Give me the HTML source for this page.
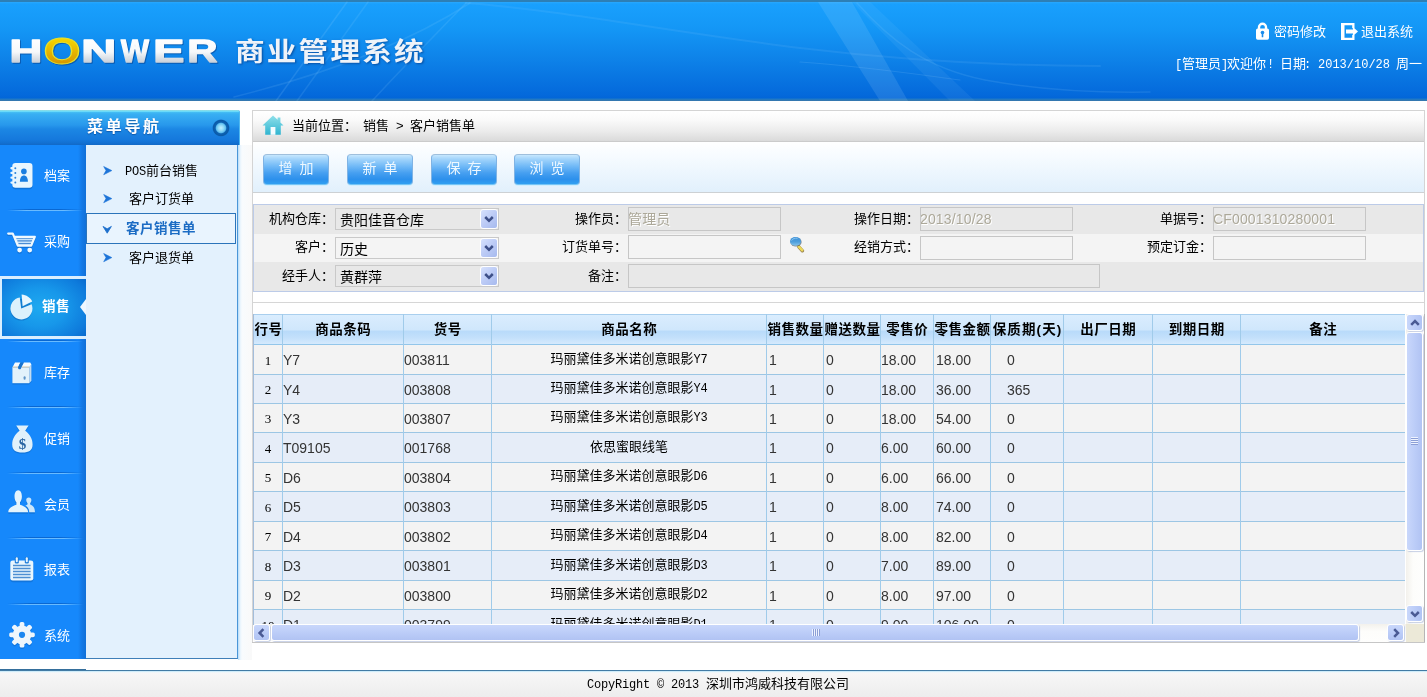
<!DOCTYPE html>
<html lang="zh-CN">
<head>
<meta charset="utf-8">
<title>HONWER 商业管理系统</title>
<style>
html,body{margin:0;padding:0}
body{width:1427px;height:697px;overflow:hidden;position:relative;background:#fff;will-change:transform;
 font-family:"Liberation Sans","Noto Sans CJK SC",sans-serif;font-size:13px;color:#000;line-height:1}
div,span,i,b{box-sizing:border-box}
.abs{position:absolute}
#hd{position:absolute;left:0;top:0;width:1427px;height:101px;overflow:hidden;
 background:linear-gradient(to bottom,#2d7fb5 0,#2d7fb5 2px,#2aa8fc 2px,#19a0fd 4px,#1497f6 28px,#0e83e9 58px,#0469db 95px,#0366d8 98px,#1c79c8 99px,#3b77a8 101px)}
#hd svg.sw{position:absolute;left:0;top:0}
#logo{position:absolute;left:0;top:0}
#title{position:absolute;left:235px;top:34px;font-size:26px;line-height:36px;font-weight:bold;letter-spacing:1.900px;color:#eef3f9;white-space:nowrap;transform:scaleX(1.14);transform-origin:0 50%;
 text-shadow:1px 1px 2px rgba(0,40,110,.55)}
.tl{position:absolute;top:24px;font-size:13px;line-height:15px;color:#fff;white-space:nowrap}
#wel{position:absolute;left:1175px;top:56px;width:252px;height:15px;font-size:13px;line-height:15px;color:#fff;white-space:pre}
#wel span{display:inline-block;vertical-align:baseline}
/* sidebar */
#sh{position:absolute;left:0;top:110px;width:240px;height:35px;
 background:linear-gradient(to bottom,#7fc3d0 0,#8ef4ff 1px,#46c0f4 2px,#38aff3 4px,#2898ec 15px,#1c87e4 19px,#1578dc 30px,#1270d2 33px,#1269c6 35px);
 border-right:1px solid #4fb8f0;border-radius:0 2px 0 0}
#sh .t{position:absolute;left:87px;top:7px;font-size:16px;line-height:20px;font-weight:bold;letter-spacing:2.7px;color:#fff;white-space:nowrap;text-shadow:0 1px 1px rgba(0,50,120,.5)}
#sh .c{position:absolute;left:212px;top:9px;width:18px;height:18px;border-radius:50%;
 background:radial-gradient(circle closest-side at 50% 50%,#c2efff 0,#92daf8 30%,#5fbff0 52%,#0d62b2 64%,#0a5aa8 86%,rgba(20,112,200,.6) 94%,rgba(20,112,200,0) 100%)}
#sl{position:absolute;left:0;top:145px;width:86px;height:514px;background:linear-gradient(to right,#1688fb 0,#1688fb 78px,#1379e6 82px,#1170d8 86px);overflow:hidden}
.mi{position:absolute;left:0;width:86px;height:66px}
.mi .tx{position:absolute;left:44px;top:23px;font-size:13px;line-height:16px;color:#fff;white-space:nowrap;letter-spacing:0}
.mi svg{position:absolute;left:0;top:0}
.sep{position:absolute;left:7px;width:76px;height:2px;background:linear-gradient(to right,rgba(8,100,205,0),rgba(8,100,205,.9) 30%,rgba(8,100,205,.9) 70%,rgba(8,100,205,0)) 0 0/100% 1px no-repeat,linear-gradient(to right,rgba(110,190,255,0),rgba(110,190,255,.95) 25%,rgba(110,190,255,.95) 75%,rgba(110,190,255,0)) 0 1px/100% 1px no-repeat}
#sel{position:absolute;left:0;top:131px;width:86px;height:63px;background:#d9eeff}
#sel .in{position:absolute;left:2px;top:3px;width:84px;height:57px;
 background:radial-gradient(ellipse 70% 75% at 45% 50%,#1ea9f0 0,#1797ea 45%,#0e7bdc 85%,#0a6dd0 100%)}
#sel .tx{position:absolute;left:42px;top:23px;font-size:13.5px;line-height:16px;font-weight:bold;color:#fff;white-space:nowrap;letter-spacing:.4px}
#sel .ar{position:absolute;left:80px;top:23px;width:0;height:0;border-style:solid;border-width:8px 6px 8px 0;border-color:transparent #eef7ff transparent transparent}
#sp{position:absolute;left:86px;top:145px;width:152px;height:514px;background:#e3f1fd;border-right:1px solid #4a96d8;border-bottom:1px solid #3f7fb8}
#spg{position:absolute;left:238px;top:145px;width:14px;height:515px;background:linear-gradient(to right,#b4dbf8 0,#e6f3fd 2px,#f8fbfe 4px,#f9f9f9 14px)}
.si{position:absolute;left:0;width:151px;height:29px;font-size:13px;line-height:29px;white-space:nowrap}
.si .tx{position:absolute;left:0;width:151px;text-align:center;top:0}
.si svg{position:absolute;left:16px;top:9px}
.si.on{left:0;width:150px;height:31px;border:1px solid #2b74ba;background:#e9f4fe;line-height:30px}
.si.on .tx{font-size:13.5px;letter-spacing:.5px;font-weight:bold;color:#1c6cc4;width:148px}
.si.on svg{left:14.5px;top:9.5px}
/* main */
#mn{position:absolute;left:252px;top:110px;width:1173px;height:533px;border:1px solid #d4d4d4;border-bottom:none;background:#fff}
#bc{position:absolute;left:0;top:0;width:1171px;height:31px;background:linear-gradient(to bottom,#fff 0,#fafafa 30%,#ebebeb 68%,#dadada 100%);border-bottom:1px solid #cbcbcb}
#bc .tx{position:absolute;top:7px;font-size:13px;line-height:15px;white-space:nowrap}
#tb{position:absolute;left:0;top:31px;width:1171px;height:51px;background:linear-gradient(to bottom,#fff 0,#f6fbff 30%,#e1f0fc 100%);border-bottom:1px solid #cdd1d4}
.btn{position:absolute;top:12px;width:66px;height:31px;border-radius:4px;border:1px solid;border-color:#9fbfdc #7fb3e4 #74c4f6 #7fb3e4;
 background:linear-gradient(to bottom,#c6e7fe 0,#a2d4fb 14%,#72baf7 38%,#469ff0 62%,#2c90ec 84%,#31a0f1 100%);
 box-shadow:0 1px 0 #cfeefe;color:#eef8ff;font-size:14px;line-height:26px;text-align:center;white-space:nowrap;letter-spacing:0;word-spacing:3px}
#fm{position:absolute;left:0;top:93px;width:1171px;height:88px;border:1px solid #bccbe8;background:#e8e8e8}
.fr{position:absolute;left:0;width:1169px}
.lb{position:absolute;font-size:13px;line-height:15px;text-align:right;white-space:nowrap;width:90px}
.ip{position:absolute;height:24px;border:1px solid #c6c6c6;font-size:14px;line-height:23px;padding-left:0;text-indent:-1px;white-space:nowrap;color:#aca899;overflow:hidden;text-shadow:1px 1px 0 #fff;letter-spacing:.15px}
.sl{position:absolute;width:164px;height:22px;border:1px solid #c9c9c9;font-size:14px;line-height:23px;padding-left:4px;white-space:nowrap;color:#000}
.sl i{position:absolute;right:0;top:0;width:18px;height:20px;border:1px solid #fff;border-radius:3px;background:linear-gradient(135deg,#d6e1fd,#bccbf6 50%,#a7baee)}
.sl i svg{position:absolute;left:2px;top:2.5px}
#hl{position:absolute;left:0;top:191px;width:1171px;height:1px;background:#d6d6d6}
/* grid */
#gd{position:absolute;left:1px;top:203px;width:1151px;height:310px;overflow:hidden;background:#f3f3f3}
#gh{position:absolute;left:0;top:0;width:1152px;height:31px;background:linear-gradient(to bottom,#daedfe 0,#d0e7fc 50%,#b9dbfa 57%,#c3e0fb 78%,#d5eafd 100%);border-top:1px solid #a9cfee;border-bottom:1px solid #93c6ea}
.hc{position:absolute;top:0;height:29px;font-weight:bold;font-size:13.5px;line-height:29px;text-align:center;white-space:nowrap;overflow:visible;letter-spacing:.5px;text-indent:.5px}
.vl{position:absolute;top:0;width:1px;height:311px;background:#a0cbea}
.rw{position:absolute;left:0;width:1152px;border-bottom:1px solid #9cc6e4}
.rw.a{background:#f3f3f3}
.rw.b{background:#e6edf8}
.c{position:absolute;top:0;white-space:nowrap;font-size:14px;color:#333}
.c.n{font-family:"Liberation Serif",serif;font-size:13px;color:#000;text-align:center}
.c.nm{font-size:13px;color:#000;text-align:center}
/* scrollbars */
#vs{position:absolute;left:1153px;top:203px;width:18px;height:310px;background:linear-gradient(to right,#f3f1ec,#fdfdfb 40%,#fefefd)}
#hs{position:absolute;left:1px;top:513px;width:1152px;height:18px;background:linear-gradient(to bottom,#f3f1ec,#fdfdfb 40%,#fefefd)}
#cr{position:absolute;left:1153px;top:513px;width:18px;height:18px;background:#ece9d8}
.sb{position:absolute;width:17px;height:17px;border-radius:3px;border:1px solid #fff;background:linear-gradient(to right,#c9d7fb,#bccdf8 50%,#b1c3f3);box-shadow:1px 1px 1px rgba(130,150,200,.45)}
.sb.h{background:linear-gradient(to bottom,#c9d7fb,#bccdf8 50%,#b1c3f3)}
.sb svg{position:absolute;left:1.5px;top:1.5px}
.th{position:absolute;border-radius:3px;border:1px solid #fff;box-shadow:1px 1px 1px rgba(130,150,200,.45)}
/* footer */
#ft{position:absolute;left:0;top:670px;width:1427px;height:27px;background:linear-gradient(to bottom,#3d7299 0,#4684b0 1px,#b5e2f6 1px,#e9f6fc 2px,#f7f7f7 3px,#f4f4f4 10px,#ededed 27px)}
#ft .tx{position:absolute;left:587px;top:6px;font-size:13px;line-height:15px;white-space:nowrap}
.mo{font-family:"Liberation Mono",monospace;font-size:12px;letter-spacing:-.2px}
</style>
</head>
<body>
<div id="hd">
<svg class="sw" width="1427" height="101" viewBox="0 0 1427 101">
<g fill="none" stroke="#a8dcff" stroke-linecap="round">
<path d="M234 97C310 78 400 48 470 3" stroke-width="1.500" opacity=".12"/>
<path d="M276 101L347 2" stroke-width="1.500" opacity=".14"/>
<path d="M297 101L368 2" stroke-width="1.500" opacity=".12"/>
<path d="M372 101C402 68 440 30 466 3" stroke-width="1.500" opacity=".12"/>
<path d="M466 3C560 10 660 30 800 48C900 60 1000 66 1100 66" stroke-width="2" opacity=".1"/>
<path d="M857 3C890 40 925 68 985 80C1040 90 1090 93 1150 92" stroke-width="1.500" opacity=".12"/>
<path d="M800 62C860 66 900 72 960 80" stroke-width="1.200" opacity=".14"/>
</g>
<path d="M818 2L852 2L908 101L880 101Z" fill="#bfe6ff" opacity=".13"/>
<path d="M852 2L870 2L975 101L950 101Z" fill="#bfe6ff" opacity=".07"/>
</svg>
<svg id="logo" width="230" height="101" viewBox="0 0 230 101" style="filter:drop-shadow(1.2px 1.500px .6px rgba(6,55,130,.5))"><defs><linearGradient id="lg" x1="0" y1="0" x2="0" y2="100" gradientUnits="userSpaceOnUse"><stop offset=".39" stop-color="#ffffff"/><stop offset=".52" stop-color="#f6f8fa"/><stop offset=".63" stop-color="#c6ced8"/></linearGradient><linearGradient id="og" x1="0" y1="0" x2="0" y2="100" gradientUnits="userSpaceOnUse"><stop offset=".38" stop-color="#f7d800"/><stop offset=".65" stop-color="#d69400"/></linearGradient></defs>
<text font-family="Liberation Sans,sans-serif" font-weight="bold" stroke-linejoin="round"><tspan x="9.61" y="62.30" font-size="31.8" textLength="32.80" lengthAdjust="spacingAndGlyphs" fill="url(#lg)" stroke="url(#lg)" stroke-width="1.3">H</tspan><tspan x="43.54" y="64.10" font-size="36.4" textLength="37.17" lengthAdjust="spacingAndGlyphs" fill="url(#og)" stroke="#e9e12a" stroke-width="1">O</tspan><tspan x="81.21" y="62.30" font-size="31.8" textLength="35.01" lengthAdjust="spacingAndGlyphs" fill="url(#lg)" stroke="url(#lg)" stroke-width="1.3">N</tspan><tspan x="121.12" y="62.30" font-size="31.8" textLength="27.96" lengthAdjust="spacingAndGlyphs" fill="url(#lg)" stroke="url(#lg)" stroke-width="1.3">W</tspan><tspan x="153.33" y="62.30" font-size="31.8" textLength="31.15" lengthAdjust="spacingAndGlyphs" fill="url(#lg)" stroke="url(#lg)" stroke-width="1.3">E</tspan><tspan x="187.15" y="62.30" font-size="31.8" textLength="30.26" lengthAdjust="spacingAndGlyphs" fill="url(#lg)" stroke="url(#lg)" stroke-width="1.3">R</tspan></text>
</svg>
<div id="title">商业管理系统</div>
<svg class="abs" style="left:1255px;top:22px" width="15" height="19" viewBox="0 0 15 19"><path d="M4 8V5.200a3.500 3.500 0 0 1 7 0V8" fill="none" stroke="#fff" stroke-width="2.400"/><rect x="1" y="6.600" width="13" height="11.200" rx="1.700" fill="#fff"/><circle cx="7.500" cy="10.600" r="1.800" fill="#1b8cec"/><rect x="6.700" y="11" width="1.600" height="4.200" rx=".5" fill="#1b8cec"/></svg>
<div class="tl" style="left:1274px">密码修改</div>
<svg class="abs" style="left:1340px;top:22px" width="19" height="19" viewBox="0 0 19 19"><path d="M1 1h13.500v5.200h-2.300V3.300H4.500v12.400h7.700v-2.900h2.300V18H1z" fill="#fff"/><path d="M6 7.600h7V5l5 4.500-5 4.500v-2.600H6z" fill="#fff"/></svg>
<div class="tl" style="left:1361px">退出系统</div>
<div id="wel"><span class="mo" style="width:7px">[</span><span style="width:39px">管理员</span><span class="mo" style="width:6px">]</span><span style="width:39px">欢迎你</span><span class="mo" style="width:14px;text-indent:1px">! </span><span style="width:24px">日期</span><span class="mo" style="width:14px">: </span><span class="mo" style="width:78px;letter-spacing:0">2013/10/28 </span><span>周一</span></div>
</div>
<div id="sh"><div class="t">菜单导航</div><div class="c"></div></div>
<div id="sl">
<div class="mi" style="top:0px"><div class="tx">档案</div></div>
<svg class="abs" style="left:10px;top:18px" width="24" height="27" viewBox="0 0 24 27"><rect x="2.300" y="1.600" width="20.200" height="24.600" rx="3.200" fill="#0b5fb8" opacity=".5"/><rect x="2.300" y="0" width="20.200" height="24.800" rx="3.200" fill="#e9f6fe"/><rect x=".3" y="4.1" width="4.600" height="2.300" rx="1.150" fill="#eaf7fe"/><circle cx="5.300" cy="5.2" r="1" fill="#2b82d8"/><rect x=".3" y="8.8" width="4.600" height="2.300" rx="1.150" fill="#eaf7fe"/><circle cx="5.300" cy="10.0" r="1" fill="#2b82d8"/><rect x=".3" y="13.5" width="4.600" height="2.300" rx="1.150" fill="#eaf7fe"/><circle cx="5.300" cy="14.7" r="1" fill="#2b82d8"/><rect x=".3" y="18.4" width="4.600" height="2.300" rx="1.150" fill="#eaf7fe"/><circle cx="5.300" cy="19.5" r="1" fill="#2b82d8"/><circle cx="13.900" cy="8.400" r="2.800" fill="#1a7ee0"/><path d="M9.900 18.800C9.900 14.600 11.600 12.600 13.900 12.600S17.900 14.600 17.900 18.800z" fill="#1a7ee0"/></svg>
<div class="mi" style="top:66px"><div class="tx">采购</div></div>
<svg class="abs" style="left:7px;top:87.4px" width="30" height="23" viewBox="0 0 30 23"><g opacity=".5" transform="translate(0,1.300)"><path d="M1.200 1.600h4.600l5 12h13.400l3.600-8.800H7.600" fill="none" stroke="#0b5fb8" stroke-width="2.200" stroke-linejoin="round" stroke-linecap="round"/><circle cx="12.600" cy="18.100" r="2.400" fill="#0b5fb8"/><circle cx="22.700" cy="18.100" r="2.400" fill="#0b5fb8"/></g><path d="M7.600 4.800h20.200l-3.600 8.800H10.800z" fill="#c9e5fc"/><path d="M9.400 6.200h16.800M10.400 8.900h15M11.400 11.700h13" stroke="#4a8cd4" stroke-width="1.200" fill="none"/><path d="M1.200 1.600h4.600l5 12h13.400l3.600-8.800H7.600" fill="none" stroke="#f0f9ff" stroke-width="2.200" stroke-linejoin="round" stroke-linecap="round"/><circle cx="12.600" cy="18.100" r="2.400" fill="#f0f9ff"/><circle cx="22.700" cy="18.100" r="2.400" fill="#f0f9ff"/></svg>
<div id="sel"><div class="in"></div><div class="tx">销售</div><div class="ar"></div></div>
<svg class="abs" style="left:10px;top:148.7px" width="24" height="28" viewBox="0 0 24 28"><circle cx="11.200" cy="15.800" r="10.800" fill="#0b5fb8" opacity=".5"/><path d="M11.200 14.400L9.800 3.500A11 11 0 1 0 21.600 10.200z" fill="#dcf1fc"/><path d="M12.600 12.200L11.600.6c4.800.2 8.800 3.200 10.600 7z" fill="#e8f7fe"/></svg>
<div class="mi" style="top:197px"><div class="tx">库存</div></div>
<svg class="abs" style="left:11.8px;top:216.8px" width="20" height="23" viewBox="0 0 20 23"><path d="M.4 5.600L3 .6h5.600L6.200 5h3L11.800.6h6.400l1.200 2v16.200l-2.400 2.400H.4z" fill="#0b5fb8" opacity=".45" transform="translate(0,1.300)"/><path d="M.4 5.400h16.800v15.800H.4z" fill="#e2f2fb"/><path d="M17.200 5.400l2.200-2.800v16.200l-2.200 2.400z" fill="#c2dcf2"/><path d="M.4 5.400L3 .6h5.400L6 5.400zM9.200 5.400L11.800.6h6.400l1.200 2-2.200 2.800z" fill="#f6fcff"/><path d="M.4 5.400h5.600l.4-1H.9zM9.200 5.400h8l.6-1h-8z" fill="#c9b48a" opacity=".7"/><path d="M6 5.400L8.400.6h3.400L9.200 5.400c0 2.600-3.200 2.600-3.200 0z" fill="#1b74cc"/><rect x="11.600" y="14.200" width="2" height="3.600" rx="1" fill="#5f95c8"/></svg>
<div class="mi" style="top:263px"><div class="tx">促销</div></div>
<svg class="abs" style="left:11.8px;top:279.9px" width="21" height="30" viewBox="0 0 21 30"><path d="M4.200.4h12.400l-3.400 5.400c4.400 3 7.400 8.200 7.400 13.600 0 5.800-3.600 8-10.200 8S.2 25.200.2 19.400c0-5.400 3-10.600 7.400-13.600z" fill="#0b5fb8" opacity=".45" transform="translate(0,1.300)"/><path d="M4.200.4h12.400l-3.400 5.400c4.400 3 7.400 8.200 7.400 13.600 0 5.800-3.600 8-10.200 8S.2 25.200.2 19.400c0-5.400 3-10.600 7.400-13.600z" fill="#e0f1fb"/><text x="10.400" y="24.300" font-family="Liberation Serif,serif" font-weight="bold" font-size="15" text-anchor="middle" fill="#2a66a2">$</text></svg>
<div class="mi" style="top:329px"><div class="tx">会员</div></div>
<svg class="abs" style="left:8px;top:344.7px" width="28" height="25" viewBox="0 0 28 25"><g fill="#0b5fb8" opacity=".45" transform="translate(0,1.500)"><path d="M.3 22.300C.3 17.800 4 16.300 8.400 14.700V12.300C7.200 10.900 6.500 8.900 6.500 6.400 6.500 3 7.900.2 10.200.2S13.900 3 13.900 6.400C13.900 8.900 13.200 10.900 12 12.300V14.700C16.400 16.300 20.100 17.800 20.100 22.300Z"/><path d="M21.200 22.300C21.200 18.600 19.400 16.900 17.300 15.600 18.500 15.100 19.500 14.700 19.500 14.200V13.200C18.700 12.300 18.200 11.300 18.200 10.200 18.200 8.600 19.200 7.500 20.800 7.500S23.400 8.600 23.400 10.200C23.400 11.300 23 12.300 22.200 13.200V14.400C25 15.600 27 17.300 27 22.300Z"/></g><path d="M21.200 22.300C21.200 18.600 19.400 16.900 17.300 15.600 18.500 15.100 19.500 14.700 19.500 14.200V13.200C18.700 12.300 18.200 11.300 18.200 10.200 18.200 8.600 19.200 7.500 20.800 7.500S23.400 8.600 23.400 10.200C23.400 11.300 23 12.300 22.200 13.200V14.400C25 15.600 27 17.300 27 22.300Z" fill="#cbe6fa"/><path d="M.3 22.300C.3 17.800 4 16.300 8.400 14.700V12.300C7.200 10.900 6.500 8.900 6.500 6.400 6.500 3 7.900.2 10.200.2S13.900 3 13.900 6.400C13.900 8.900 13.200 10.900 12 12.300V14.700C16.400 16.300 20.100 17.800 20.100 22.300Z" fill="#e4f4fd"/></svg>
<div class="mi" style="top:394px"><div class="tx">报表</div></div>
<svg class="abs" style="left:10.3px;top:411.9px" width="24" height="26" viewBox="0 0 24 26"><rect x=".3" y="4.800" width="23" height="20.400" rx="2.400" fill="#0b5fb8" opacity=".45"/><rect x=".3" y="3.400" width="23" height="20.200" rx="2.400" fill="#e9f6fe"/><path d="M3 8.500h17.600M3 11.500h17.600M3 14.500h17.600M3 17.500h17.600M3 20.500h17.600" stroke="#4d8fd2" stroke-width="1.500" fill="none"/><rect x="4.800" y="0" width="4" height="6.600" rx="1.300" fill="#1d7cda"/><rect x="14.800" y="0" width="4" height="6.600" rx="1.300" fill="#1d7cda"/><rect x="5.800" y=".3" width="2" height="5" rx="1" fill="#e9f6fe"/><rect x="15.800" y=".3" width="2" height="5" rx="1" fill="#e9f6fe"/></svg>
<div class="mi" style="top:460px"><div class="tx">系统</div></div>
<svg class="abs" style="left:8.9px;top:476.6px" width="26" height="28" viewBox="0 0 26 28"><g fill="#0b5fb8" opacity=".4" transform="translate(0,1.300)"><rect x="10.60" y="0.00" width="4.800" height="6.500" rx="1.700" transform="rotate(0 13.00 12.80)"/><rect x="10.60" y="0.00" width="4.800" height="6.500" rx="1.700" transform="rotate(45 13.00 12.80)"/><rect x="10.60" y="0.00" width="4.800" height="6.500" rx="1.700" transform="rotate(90 13.00 12.80)"/><rect x="10.60" y="0.00" width="4.800" height="6.500" rx="1.700" transform="rotate(135 13.00 12.80)"/><rect x="10.60" y="0.00" width="4.800" height="6.500" rx="1.700" transform="rotate(180 13.00 12.80)"/><rect x="10.60" y="0.00" width="4.800" height="6.500" rx="1.700" transform="rotate(225 13.00 12.80)"/><rect x="10.60" y="0.00" width="4.800" height="6.500" rx="1.700" transform="rotate(270 13.00 12.80)"/><rect x="10.60" y="0.00" width="4.800" height="6.500" rx="1.700" transform="rotate(315 13.00 12.80)"/><circle cx="13.00" cy="12.80" r="9.300"/></g><g fill="#eef6fc"><rect x="10.60" y="0.00" width="4.800" height="6.500" rx="1.700" transform="rotate(0 13.00 12.80)"/><rect x="10.60" y="0.00" width="4.800" height="6.500" rx="1.700" transform="rotate(45 13.00 12.80)"/><rect x="10.60" y="0.00" width="4.800" height="6.500" rx="1.700" transform="rotate(90 13.00 12.80)"/><rect x="10.60" y="0.00" width="4.800" height="6.500" rx="1.700" transform="rotate(135 13.00 12.80)"/><rect x="10.60" y="0.00" width="4.800" height="6.500" rx="1.700" transform="rotate(180 13.00 12.80)"/><rect x="10.60" y="0.00" width="4.800" height="6.500" rx="1.700" transform="rotate(225 13.00 12.80)"/><rect x="10.60" y="0.00" width="4.800" height="6.500" rx="1.700" transform="rotate(270 13.00 12.80)"/><rect x="10.60" y="0.00" width="4.800" height="6.500" rx="1.700" transform="rotate(315 13.00 12.80)"/><circle cx="13.00" cy="12.80" r="9.300"/></g><circle cx="13.00" cy="12.80" r="3.100" fill="#1a86f0"/></svg>
<div class="sep" style="top:64px"></div>
<div class="sep" style="top:195px"></div>
<div class="sep" style="top:261px"></div>
<div class="sep" style="top:327px"></div>
<div class="sep" style="top:392px"></div>
<div class="sep" style="top:458px"></div>
</div>
<div id="sp">
<div class="si" style="top:11px"><svg width="11" height="11" viewBox="0 0 11 11"><path d="M1.700 1.500L9.800 5.600 1.700 9.700 4 5.600z" fill="#1d74d8" stroke="#1d74d8" stroke-width=".6" stroke-linejoin="round"/></svg><div class="tx"><span class="mo">POS</span>前台销售</div></div>
<div class="si" style="top:39px"><svg width="11" height="11" viewBox="0 0 11 11"><path d="M1.700 1.500L9.800 5.600 1.700 9.700 4 5.600z" fill="#1d74d8" stroke="#1d74d8" stroke-width=".6" stroke-linejoin="round"/></svg><div class="tx">客户订货单</div></div>
<div class="si on" style="top:68px"><svg width="11" height="11" viewBox="0 0 11 11"><path d="M1 2.400L5.200 4.800 9.400 2.400 5.200 9.200z" fill="#1d6fcc" stroke="#1d6fcc" stroke-width=".8" stroke-linejoin="round"/></svg><div class="tx">客户销售单</div></div>
<div class="si" style="top:98px"><svg width="11" height="11" viewBox="0 0 11 11"><path d="M1.700 1.500L9.800 5.600 1.700 9.700 4 5.600z" fill="#1d74d8" stroke="#1d74d8" stroke-width=".6" stroke-linejoin="round"/></svg><div class="tx">客户退货单</div></div>
</div><div id="spg"></div>
<div id="mn">
<div id="bc">
<svg class="abs" style="left:8px;top:3px" width="24" height="24" viewBox="0 0 24 24"><defs><linearGradient id="hg" x1="0" y1="0" x2="0" y2="1"><stop offset="0" stop-color="#8fe0ea"/><stop offset="1" stop-color="#2fb4d0"/></linearGradient></defs>
<path d="M12 1.500L1.500 11.400h2.700v9.400h15.600v-9.400h2.700L19.400 8.500V3.400h-2.800v2.400z" fill="url(#hg)"/><rect x="9.600" y="13" width="4.800" height="7.800" fill="#f4fcff"/></svg>
<div class="tx" style="left:39px">当前位置：</div><div class="tx" style="left:110px">销售</div><div class="tx" style="left:143px">&gt;</div><div class="tx" style="left:157px">客户销售单</div>
</div>
<div id="tb">
<div class="btn" style="left:10px">增 加</div>
<div class="btn" style="left:94px">新 单</div>
<div class="btn" style="left:178px">保 存</div>
<div class="btn" style="left:261px">浏 览</div>
</div>
<div id="fm">
<div class="fr" style="top:0px;height:29px;background:#e8e8e8"></div>
<div class="fr" style="top:29px;height:28px;background:#f4f4f4"></div>
<div class="fr" style="top:57px;height:29px;background:#e8e8e8"></div>
<div class="lb" style="left:-10px;top:6px">机构仓库：</div>
<div class="sl" style="left:81px;top:3px">贵阳佳音仓库<i><svg width="12" height="12" viewBox="0 0 12 12"><path d="M2.200 4L6 7.800 9.800 4" fill="none" stroke="#3d4f88" stroke-width="2.500"/></svg></i></div>
<div class="lb" style="left:-10px;top:34px">客户：</div>
<div class="sl" style="left:81px;top:32px">历史<i><svg width="12" height="12" viewBox="0 0 12 12"><path d="M2.200 4L6 7.800 9.800 4" fill="none" stroke="#3d4f88" stroke-width="2.500"/></svg></i></div>
<div class="lb" style="left:-10px;top:63px">经手人：</div>
<div class="sl" style="left:81px;top:60px">黄群萍<i><svg width="12" height="12" viewBox="0 0 12 12"><path d="M2.200 4L6 7.800 9.800 4" fill="none" stroke="#3d4f88" stroke-width="2.500"/></svg></i></div>
<div class="lb" style="left:283px;top:6px">操作员：</div>
<div class="ip" style="left:374px;top:2px;width:153px;height:24px;color:#aca899">管理员</div>
<div class="lb" style="left:283px;top:34px">订货单号：</div>
<div class="ip" style="left:374px;top:30px;width:153px;height:24px;color:#aca899"></div>
<div class="lb" style="left:283px;top:63px">备注：</div>
<div class="ip" style="left:374px;top:59px;width:472px;height:24px;color:#aca899"></div>
<div class="lb" style="left:575px;top:6px">操作日期：</div>
<div class="ip" style="left:666px;top:2px;width:153px;height:24px;color:#aca899">2013/10/28</div>
<div class="lb" style="left:575px;top:34px">经销方式：</div>
<div class="ip" style="left:666px;top:31px;width:153px;height:24px;color:#aca899"></div>
<div class="lb" style="left:868px;top:6px">单据号：</div>
<div class="ip" style="left:959px;top:2px;width:153px;height:24px;color:#aca899">CF0001310280001</div>
<div class="lb" style="left:868px;top:34px">预定订金：</div>
<div class="ip" style="left:959px;top:31px;width:153px;height:24px;color:#aca899"></div>
<svg class="abs" style="left:535px;top:31px" width="17" height="17" viewBox="0 0 17 17"><defs><linearGradient id="mg" x1="0" y1="0" x2="0" y2="1"><stop offset="0" stop-color="#3a8fd8"/><stop offset=".55" stop-color="#4f9fdc"/><stop offset="1" stop-color="#86c4ea"/></linearGradient></defs>
<path d="M9.800 10.800l3.600 4" stroke="#7a5c1c" stroke-width="3.400" stroke-linecap="round" opacity=".75"/><path d="M9.600 10.300l3.500 3.900" stroke="#ecd85a" stroke-width="2.600" stroke-linecap="round"/>
<ellipse cx="7" cy="6" rx="5.600" ry="4.600" fill="#4a5560" opacity=".7"/><ellipse cx="6.500" cy="5.400" rx="5.500" ry="4.400" fill="url(#mg)"/><path d="M2.600 4.600C3.600 2.600 6 1.800 8.600 2.300" stroke="#9ad0f4" stroke-width="1" fill="none" opacity=".8"/></svg>
</div>
<div id="hl"></div>
<div id="gd">
<div class="rw a" style="top:31px;height:30px">
<div class="c n" style="left:0px;width:28px;line-height:31px">1</div>
<div class="c" style="left:29px;line-height:31px">Y7</div>
<div class="c" style="left:150px;line-height:31px">003811</div>
<div class="c nm" style="left:238px;width:274px;line-height:27px">玛丽黛佳多米诺创意眼影<span class="mo">Y7</span></div>
<div class="c" style="left:515px;line-height:31px">1</div>
<div class="c" style="left:572px;line-height:31px">0</div>
<div class="c" style="left:627px;line-height:31px">18.00</div>
<div class="c" style="left:682px;line-height:31px">18.00</div>
<div class="c" style="left:753px;line-height:31px">0</div>
</div>
<div class="rw b" style="top:61px;height:29px">
<div class="c n" style="left:0px;width:28px;line-height:30px">2</div>
<div class="c" style="left:29px;line-height:30px">Y4</div>
<div class="c" style="left:150px;line-height:30px">003808</div>
<div class="c nm" style="left:238px;width:274px;line-height:26px">玛丽黛佳多米诺创意眼影<span class="mo">Y4</span></div>
<div class="c" style="left:515px;line-height:30px">1</div>
<div class="c" style="left:572px;line-height:30px">0</div>
<div class="c" style="left:627px;line-height:30px">18.00</div>
<div class="c" style="left:682px;line-height:30px">36.00</div>
<div class="c" style="left:753px;line-height:30px">365</div>
</div>
<div class="rw a" style="top:90px;height:29px">
<div class="c n" style="left:0px;width:28px;line-height:30px">3</div>
<div class="c" style="left:29px;line-height:30px">Y3</div>
<div class="c" style="left:150px;line-height:30px">003807</div>
<div class="c nm" style="left:238px;width:274px;line-height:26px">玛丽黛佳多米诺创意眼影<span class="mo">Y3</span></div>
<div class="c" style="left:515px;line-height:30px">1</div>
<div class="c" style="left:572px;line-height:30px">0</div>
<div class="c" style="left:627px;line-height:30px">18.00</div>
<div class="c" style="left:682px;line-height:30px">54.00</div>
<div class="c" style="left:753px;line-height:30px">0</div>
</div>
<div class="rw b" style="top:119px;height:30px">
<div class="c n" style="left:0px;width:28px;line-height:31px">4</div>
<div class="c" style="left:29px;line-height:31px">T09105</div>
<div class="c" style="left:150px;line-height:31px">001768</div>
<div class="c nm" style="left:238px;width:274px;line-height:27px">依思蜜眼线笔</div>
<div class="c" style="left:515px;line-height:31px">1</div>
<div class="c" style="left:572px;line-height:31px">0</div>
<div class="c" style="left:627px;line-height:31px">6.00</div>
<div class="c" style="left:682px;line-height:31px">60.00</div>
<div class="c" style="left:753px;line-height:31px">0</div>
</div>
<div class="rw a" style="top:149px;height:29px">
<div class="c n" style="left:0px;width:28px;line-height:30px">5</div>
<div class="c" style="left:29px;line-height:30px">D6</div>
<div class="c" style="left:150px;line-height:30px">003804</div>
<div class="c nm" style="left:238px;width:274px;line-height:26px">玛丽黛佳多米诺创意眼影<span class="mo">D6</span></div>
<div class="c" style="left:515px;line-height:30px">1</div>
<div class="c" style="left:572px;line-height:30px">0</div>
<div class="c" style="left:627px;line-height:30px">6.00</div>
<div class="c" style="left:682px;line-height:30px">66.00</div>
<div class="c" style="left:753px;line-height:30px">0</div>
</div>
<div class="rw b" style="top:178px;height:30px">
<div class="c n" style="left:0px;width:28px;line-height:31px">6</div>
<div class="c" style="left:29px;line-height:31px">D5</div>
<div class="c" style="left:150px;line-height:31px">003803</div>
<div class="c nm" style="left:238px;width:274px;line-height:27px">玛丽黛佳多米诺创意眼影<span class="mo">D5</span></div>
<div class="c" style="left:515px;line-height:31px">1</div>
<div class="c" style="left:572px;line-height:31px">0</div>
<div class="c" style="left:627px;line-height:31px">8.00</div>
<div class="c" style="left:682px;line-height:31px">74.00</div>
<div class="c" style="left:753px;line-height:31px">0</div>
</div>
<div class="rw a" style="top:208px;height:29px">
<div class="c n" style="left:0px;width:28px;line-height:30px">7</div>
<div class="c" style="left:29px;line-height:30px">D4</div>
<div class="c" style="left:150px;line-height:30px">003802</div>
<div class="c nm" style="left:238px;width:274px;line-height:26px">玛丽黛佳多米诺创意眼影<span class="mo">D4</span></div>
<div class="c" style="left:515px;line-height:30px">1</div>
<div class="c" style="left:572px;line-height:30px">0</div>
<div class="c" style="left:627px;line-height:30px">8.00</div>
<div class="c" style="left:682px;line-height:30px">82.00</div>
<div class="c" style="left:753px;line-height:30px">0</div>
</div>
<div class="rw b" style="top:237px;height:30px">
<div class="c n" style="left:0px;width:28px;line-height:31px">8</div>
<div class="c" style="left:29px;line-height:31px">D3</div>
<div class="c" style="left:150px;line-height:31px">003801</div>
<div class="c nm" style="left:238px;width:274px;line-height:27px">玛丽黛佳多米诺创意眼影<span class="mo">D3</span></div>
<div class="c" style="left:515px;line-height:31px">1</div>
<div class="c" style="left:572px;line-height:31px">0</div>
<div class="c" style="left:627px;line-height:31px">7.00</div>
<div class="c" style="left:682px;line-height:31px">89.00</div>
<div class="c" style="left:753px;line-height:31px">0</div>
</div>
<div class="rw a" style="top:267px;height:29px">
<div class="c n" style="left:0px;width:28px;line-height:30px">9</div>
<div class="c" style="left:29px;line-height:30px">D2</div>
<div class="c" style="left:150px;line-height:30px">003800</div>
<div class="c nm" style="left:238px;width:274px;line-height:26px">玛丽黛佳多米诺创意眼影<span class="mo">D2</span></div>
<div class="c" style="left:515px;line-height:30px">1</div>
<div class="c" style="left:572px;line-height:30px">0</div>
<div class="c" style="left:627px;line-height:30px">8.00</div>
<div class="c" style="left:682px;line-height:30px">97.00</div>
<div class="c" style="left:753px;line-height:30px">0</div>
</div>
<div class="rw b" style="top:296px;height:30px">
<div class="c n" style="left:0px;width:28px;line-height:31px">10</div>
<div class="c" style="left:29px;line-height:31px">D1</div>
<div class="c" style="left:150px;line-height:31px">003799</div>
<div class="c nm" style="left:238px;width:274px;line-height:27px">玛丽黛佳多米诺创意眼影<span class="mo">D1</span></div>
<div class="c" style="left:515px;line-height:31px">1</div>
<div class="c" style="left:572px;line-height:31px">0</div>
<div class="c" style="left:627px;line-height:31px">9.00</div>
<div class="c" style="left:682px;line-height:31px">106.00</div>
<div class="c" style="left:753px;line-height:31px">0</div>
</div>
<div id="gh">
<div class="hc" style="left:0px;width:28px">行号</div>
<div class="hc" style="left:29px;width:120px">商品条码</div>
<div class="hc" style="left:150px;width:87px">货号</div>
<div class="hc" style="left:238px;width:274px">商品名称</div>
<div class="hc" style="left:513px;width:56px">销售数量</div>
<div class="hc" style="left:570px;width:56px">赠送数量</div>
<div class="hc" style="left:627px;width:52px">零售价</div>
<div class="hc" style="left:680px;width:56px">零售金额</div>
<div class="hc" style="left:737px;width:72px;letter-spacing:1.100px;text-indent:1.100px">保质期(天)</div>
<div class="hc" style="left:810px;width:88px">出厂日期</div>
<div class="hc" style="left:899px;width:87px">到期日期</div>
<div class="hc" style="left:987px;width:164px">备注</div>
</div>
<div class="vl" style="left:28px"></div>
<div class="vl" style="left:149px"></div>
<div class="vl" style="left:237px"></div>
<div class="vl" style="left:512px"></div>
<div class="vl" style="left:569px"></div>
<div class="vl" style="left:626px"></div>
<div class="vl" style="left:679px"></div>
<div class="vl" style="left:736px"></div>
<div class="vl" style="left:809px"></div>
<div class="vl" style="left:898px"></div>
<div class="vl" style="left:986px"></div>
<div class="vl" style="left:-1px"></div>
</div>
<div class="vl" style="left:0;top:203px;height:311px;background:#a3bddb"></div>
<div id="vs">
<div class="sb" style="left:0px;top:0px"><svg width="12" height="12" viewBox="0 0 12 12"><path d="M2.200 7.800L6 4 9.800 7.800" fill="none" stroke="#4a5a94" stroke-width="2.500"/></svg></div>
<div class="th" style="left:0px;top:18px;width:17px;height:219px;background:linear-gradient(to right,#c9d7fb,#bccdf8 50%,#b1c3f3)"><span class="abs" style="left:4px;top:104px;width:7px;height:8px;background:repeating-linear-gradient(to bottom,#eef3ff 0,#eef3ff 1px,#8c9fd6 1px,#8c9fd6 2px)"></span></div>
<div class="sb" style="left:0px;top:291px"><svg width="12" height="12" viewBox="0 0 12 12"><path d="M2.200 4L6 7.800 9.800 4" fill="none" stroke="#4a5a94" stroke-width="2.500"/></svg></div>
</div>
<div id="hs">
<div class="sb h" style="left:-1px;top:0px"><svg width="12" height="12" viewBox="0 0 12 12"><path d="M7.400 2.200L3.600 6 7.400 9.800" fill="none" stroke="#4a5a94" stroke-width="2.500"/></svg></div>
<div class="th" style="left:17px;top:0px;width:1088px;height:17px;background:linear-gradient(to bottom,#c9d7fb,#bccdf8 50%,#b1c3f3)"><span class="abs" style="left:540px;top:4px;width:8px;height:7px;background:repeating-linear-gradient(to right,#eef3ff 0,#eef3ff 1px,#8c9fd6 1px,#8c9fd6 2px)"></span></div>
<div class="sb h" style="left:1133px;top:0px"><svg width="12" height="12" viewBox="0 0 12 12"><path d="M4.200 2.200L8 6 4.200 9.800" fill="none" stroke="#4a5a94" stroke-width="2.500"/></svg></div>
</div>
<div id="cr"></div>
<div class="abs" style="left:1171px;top:203px;width:1px;height:329px;background:#b6b6b6"></div>
</div>
<div class="abs" style="left:252px;top:642px;width:1173px;height:1px;background:#c6c6c6"></div>
<div class="abs" style="left:0;top:669px;width:86px;height:1px;background:#356f9c"></div>
<div id="ft"><div class="tx"><span class="mo">CopyRight © 2013 </span>深圳市鸿威科技有限公司</div></div>
</body>
</html>
